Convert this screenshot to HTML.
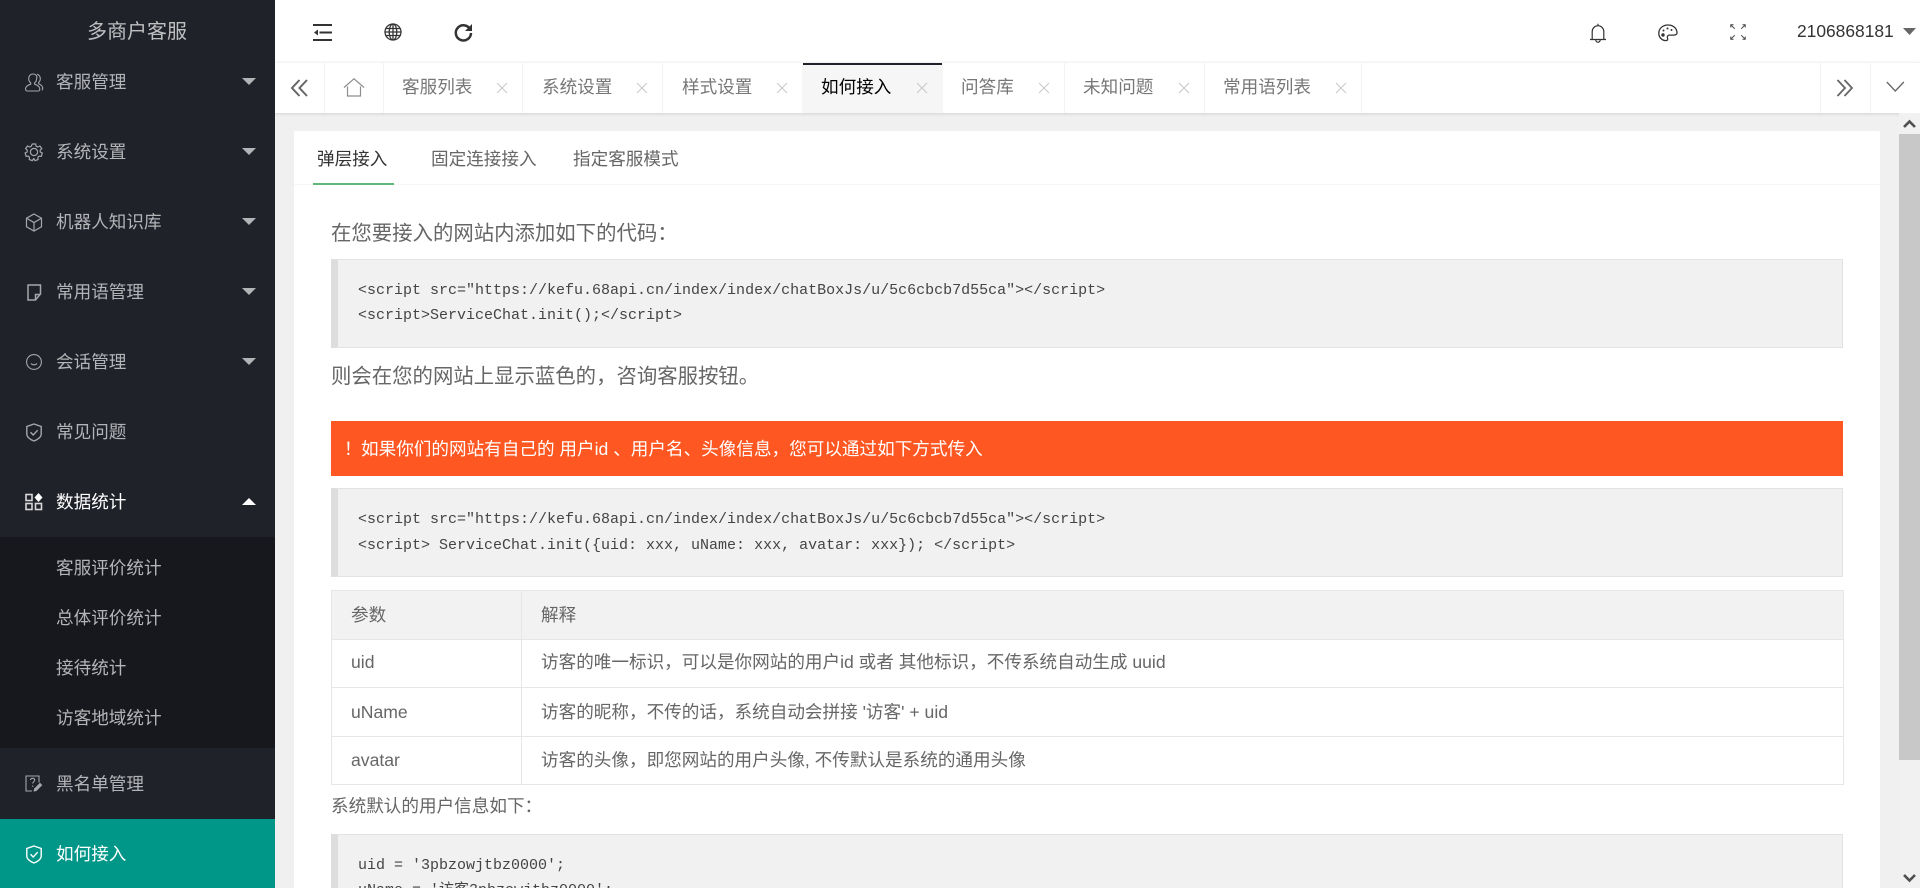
<!DOCTYPE html>
<html lang="zh-CN">
<head>
<meta charset="utf-8">
<title>多商户客服</title>
<style>
html,body{margin:0;padding:0;width:1920px;height:888px;overflow:hidden;background:#f0f0f0}
body{position:relative;font-family:"Liberation Sans","Noto Sans CJK SC",sans-serif;font-size:17.6px;color:#666}
.a,.t,svg{position:absolute}
.t{white-space:pre;height:30px;line-height:30px}
svg{overflow:visible;fill:none}
.m{color:#b3b4b7;left:56px}
.tab{color:#777}
.mono{font-family:"Liberation Mono",monospace;font-size:15px;color:#444;left:358px}
.code{position:absolute;left:331px;background:#f1f1f1;border:1px solid #e2e2e2;border-left:7px solid #ddd;box-sizing:border-box;width:1512px}
.line{position:absolute;background:#e6e6e6}
.d{position:absolute;top:63px;width:1px;height:50px;background:#f3f3f3}
</style>
</head>
<body>

<!-- main content background -->
<div class="a" style="left:275px;top:0;width:1645px;height:62px;background:#fff"></div>
<div class="a" style="left:275px;top:62px;width:1645px;height:51px;background:#fff;border-top:1px solid #f3f3f3;box-sizing:border-box;box-shadow:0 1px 3px rgba(0,0,0,.12)"></div>

<!-- card -->
<div class="a" style="left:294px;top:131px;width:1586px;height:757px;background:#fff;border-radius:2px 2px 0 0"></div>
<div class="a" style="left:294px;top:184px;width:1586px;height:1px;background:#f6f6f6"></div>
<div class="a" style="left:313px;top:183px;width:81px;height:2px;background:#5fb878"></div>
<div class="t" style="left:317px;top:144px;color:#333">弹层接入</div>
<div class="t" style="left:431px;top:144px">固定连接接入</div>
<div class="t" style="left:573px;top:144px">指定客服模式</div>

<!-- content -->
<div class="t" style="left:331px;top:219px;font-size:20.4px">在您要接入的网站内添加如下的代码：</div>
<div class="code" style="top:259px;height:89px"></div>
<div class="t mono" style="top:276px">&lt;script src="https://kefu.68api.cn/index/index/chatBoxJs/u/5c6cbcb7d55ca"&gt;&lt;/script&gt;</div>
<div class="t mono" style="top:301px">&lt;script&gt;ServiceChat.init();&lt;/script&gt;</div>
<div class="t" style="left:331px;top:362px;font-size:20.4px">则会在您的网站上显示蓝色的，咨询客服按钮。</div>

<div class="a" style="left:331px;top:421px;width:1512px;height:55px;background:#ff5722"></div>
<div class="t" style="left:344px;top:434px;color:#fff">！</div>
<div class="t" style="left:361px;top:434px;color:#fff">如果你们的网站有自己的 用户id 、用户名、头像信息，您可以通过如下方式传入</div>

<div class="code" style="top:488px;height:89px"></div>
<div class="t mono" style="top:505px">&lt;script src="https://kefu.68api.cn/index/index/chatBoxJs/u/5c6cbcb7d55ca"&gt;&lt;/script&gt;</div>
<div class="t mono" style="top:531px">&lt;script&gt; ServiceChat.init({uid: xxx, uName: xxx, avatar: xxx}); &lt;/script&gt;</div>

<!-- table -->
<div class="a" style="left:331px;top:590px;width:1512px;height:49px;background:#f2f2f2"></div>
<div class="line" style="left:331px;top:590px;width:1512px;height:1px"></div>
<div class="line" style="left:331px;top:639px;width:1512px;height:1px"></div>
<div class="line" style="left:331px;top:687px;width:1512px;height:1px"></div>
<div class="line" style="left:331px;top:736px;width:1512px;height:1px"></div>
<div class="line" style="left:331px;top:784px;width:1512px;height:1px"></div>
<div class="line" style="left:331px;top:590px;width:1px;height:195px"></div>
<div class="line" style="left:521px;top:590px;width:1px;height:195px"></div>
<div class="line" style="left:1843px;top:590px;width:1px;height:195px"></div>
<div class="t" style="left:351px;top:600px">参数</div>
<div class="t" style="left:541px;top:600px">解释</div>
<div class="t" style="left:351px;top:647px">uid</div>
<div class="t" style="left:541px;top:647px">访客的唯一标识，可以是你网站的用户id 或者 其他标识，不传系统自动生成 uuid</div>
<div class="t" style="left:351px;top:697px">uName</div>
<div class="t" style="left:541px;top:697px">访客的昵称，不传的话，系统自动会拼接 '访客' + uid</div>
<div class="t" style="left:351px;top:745px">avatar</div>
<div class="t" style="left:541px;top:745px">访客的头像，即您网站的用户头像, 不传默认是系统的通用头像</div>
<div class="t" style="left:331px;top:791px">系统默认的用户信息如下：</div>

<div class="code" style="top:834px;height:80px"></div>
<div class="t mono" style="top:851px">uid = '3pbzowjtbz0000';</div>
<div class="t mono" style="top:876px">uName = '访客3pbzowjtbz0000';</div>

<!-- scrollbar -->
<div class="a" style="left:1899px;top:113px;width:21px;height:775px;background:#f1f1f1"></div>
<div class="a" style="left:1899px;top:134px;width:21px;height:626px;background:#c8c8c8"></div>
<svg style="left:1899px;top:113px" width="21" height="21"><path d="M5 14l5.500-5.500L16 14" stroke="#505050" stroke-width="2.600"/></svg>
<svg style="left:1899px;top:867px" width="21" height="21"><path d="M5 8l5.500 5.500L16 8" stroke="#505050" stroke-width="2.600"/></svg>

<!-- top bar icons -->
<svg style="left:313px;top:23px" width="20" height="19"><path d="M0 2h19M6.500 9.500h12.500M0 17h19" stroke="#333" stroke-width="2"/><path d="M5 6.500v6L1 9.500z" fill="#333"/></svg>
<svg style="left:384px;top:23px" width="18" height="18"><g stroke="#333" stroke-width="1.300" fill="none"><circle cx="9" cy="9" r="8"/><ellipse cx="9" cy="9" rx="3.800" ry="8"/><path d="M9 1v16M1.800 5.500h14.400M1 9h16M1.800 12.500h14.400"/></g></svg>
<svg style="left:454px;top:23px" width="19" height="19"><path d="M16.200 6.500A7.600 7.600 0 1 0 17 10" stroke="#333" stroke-width="2.500"/><path d="M18 1v7h-7z" fill="#333"/></svg>

<svg style="left:1589px;top:23px" width="18" height="20"><path d="M1 16.500h16M3.200 16.500V8.500a5.800 5.800 0 0 1 11.600 0v8M9 .8v2M6.800 17a2.200 2.200 0 0 0 4.400 0" stroke="#333" stroke-width="1.200"/></svg>
<svg style="left:1658px;top:24px" width="20" height="18"><path d="M10 1C4.500 1 .8 4.800.8 9.200c0 4.300 3.400 7.400 7 7.400 2 0 2.200-1.200 1.700-2.500-.6-1.600.3-3 2-3h4.200c2.300 0 3.500-1 3.300-2.700C18.600 4 15 1 10 1z" stroke="#333" stroke-width="1.300"/><circle cx="5" cy="11" r="1.700" fill="#333"/><circle cx="5.500" cy="6.500" r="1" fill="#333"/><circle cx="9.500" cy="4.500" r="1" fill="#333"/><circle cx="13.500" cy="6" r="1" fill="#333"/></svg>
<svg style="left:1730px;top:24px" width="16" height="16"><g stroke="#444" stroke-width="1"><path d="M.8 3.500V.8h2.700M.8.800l4 4M15.200 3.500V.8h-2.700M15.200.8l-4 4M.8 12.500v2.700h2.700M.8 15.200l4-4M15.200 12.500v2.700h-2.700M15.200 15.200l-4-4"/></g></svg>
<div class="t" style="left:1797px;top:16px;font-size:17.4px;color:#333">2106868181</div>
<svg style="left:1903px;top:28px" width="13" height="7"><path d="M0 0h13L6.500 7z" fill="#666"/></svg>

<!-- tab bar -->
<div class="d" style="left:324px"></div>
<div class="d" style="left:383px"></div>
<div class="d" style="left:522px"></div>
<div class="d" style="left:662px"></div>
<div class="d" style="left:1064px"></div>
<div class="d" style="left:1204px"></div>
<div class="d" style="left:1361px"></div>
<div class="d" style="left:1820px"></div>
<div class="d" style="left:1870px"></div>
<div class="a" style="left:802px;top:63px;width:141px;height:50px;background:#f6f6f6"></div>
<div class="a" style="left:803px;top:63px;width:139px;height:2px;background:#20222a"></div>

<svg style="left:290px;top:79px" width="20" height="18"><path d="M9.500 1L2 9l7.500 8M17 1L9.500 9l7.500 8" stroke="#666" stroke-width="2"/></svg>
<svg style="left:343px;top:78px" width="22" height="19"><path d="M1 9.500L11 .8l10 8.700M4.500 8.500v9.500h13V8.500" stroke="#8e8e8e" stroke-width="1.200"/></svg>
<svg style="left:1836px;top:79px" width="20" height="18"><path d="M1.500 1L9 9l-7.500 8M8.500 1L16 9l-7.500 8" stroke="#666" stroke-width="1.800"/></svg>
<svg style="left:1886px;top:81px" width="19" height="12"><path d="M.8 1l8.500 9 8.500-9" stroke="#666" stroke-width="1.300"/></svg>

<div class="t tab" style="left:402px;top:72px">客服列表</div>
<div class="t tab" style="left:542px;top:72px">系统设置</div>
<div class="t tab" style="left:682px;top:72px">样式设置</div>
<div class="t" style="left:821px;top:72px;color:#000">如何接入</div>
<div class="t tab" style="left:961px;top:72px">问答库</div>
<div class="t tab" style="left:1083px;top:72px">未知问题</div>
<div class="t tab" style="left:1223px;top:72px">常用语列表</div>
<svg style="left:497px;top:83px" width="10" height="10"><path d="M0 0l10 10M10 0L0 10" stroke="#c8c8c8"/></svg>
<svg style="left:637px;top:83px" width="10" height="10"><path d="M0 0l10 10M10 0L0 10" stroke="#c8c8c8"/></svg>
<svg style="left:777px;top:83px" width="10" height="10"><path d="M0 0l10 10M10 0L0 10" stroke="#c8c8c8"/></svg>
<svg style="left:917px;top:83px" width="10" height="10"><path d="M0 0l10 10M10 0L0 10" stroke="#c8c8c8"/></svg>
<svg style="left:1039px;top:83px" width="10" height="10"><path d="M0 0l10 10M10 0L0 10" stroke="#c8c8c8"/></svg>
<svg style="left:1179px;top:83px" width="10" height="10"><path d="M0 0l10 10M10 0L0 10" stroke="#c8c8c8"/></svg>
<svg style="left:1336px;top:83px" width="10" height="10"><path d="M0 0l10 10M10 0L0 10" stroke="#c8c8c8"/></svg>

<!-- sidebar -->
<div class="a" style="left:0;top:0;width:275px;height:888px;background:#20222a"></div>
<div class="a" style="left:0;top:537px;width:275px;height:211px;background:#16181d;border-radius:2px"></div>
<div class="a" style="left:0;top:819px;width:275px;height:69px;background:#009688"></div>

<div class="t" style="left:87px;top:17px;font-size:20px;color:#bfc0c2">多商户客服</div>

<div class="t m" style="top:67px">客服管理</div>
<div class="t m" style="top:137px">系统设置</div>
<div class="t m" style="top:207px">机器人知识库</div>
<div class="t m" style="top:277px">常用语管理</div>
<div class="t m" style="top:347px">会话管理</div>
<div class="t m" style="top:417px">常见问题</div>
<div class="t" style="left:56px;top:487px;color:#fff">数据统计</div>
<div class="t m" style="top:553px">客服评价统计</div>
<div class="t m" style="top:603px">总体评价统计</div>
<div class="t m" style="top:653px">接待统计</div>
<div class="t m" style="top:703px">访客地域统计</div>
<div class="t m" style="top:769px">黑名单管理</div>
<div class="t" style="left:56px;top:839px;color:#fff">如何接入</div>

<!-- carets -->
<svg style="left:242px;top:78px" width="14" height="7"><path d="M0 0h14L7 7z" fill="#b3b4b7"/></svg>
<svg style="left:242px;top:148px" width="14" height="7"><path d="M0 0h14L7 7z" fill="#b3b4b7"/></svg>
<svg style="left:242px;top:218px" width="14" height="7"><path d="M0 0h14L7 7z" fill="#b3b4b7"/></svg>
<svg style="left:242px;top:288px" width="14" height="7"><path d="M0 0h14L7 7z" fill="#b3b4b7"/></svg>
<svg style="left:242px;top:358px" width="14" height="7"><path d="M0 0h14L7 7z" fill="#b3b4b7"/></svg>
<svg style="left:242px;top:498px" width="14" height="7"><path d="M0 7h14L7 0z" fill="#fff"/></svg>

<!-- sidebar icons -->
<svg style="left:25px;top:73px" width="18" height="19"><g stroke="#a6a7aa" stroke-width="1.100"><path d="M8 1c-2.700 0-4.300 2-4.300 4.600 0 1.900.8 3.300 2 4.200v1.400c-2.300.8-4.700 2-5.100 4-.2 1 .2 2.800 1.200 2.800h11.800c1 0 1.300-1.800 1.100-2.800-.4-2-2.800-3.200-5.100-4V9.800c1.200-.9 2-2.300 2-4.200C12.600 3 10.700 1 8 1z"/><path d="M12 1.300c2 .4 3.300 2.200 3.300 4.300 0 1.700-.7 3-1.700 3.800v1.300c2 .8 3.700 1.900 4 3.700.2 1 0 2.600-.9 2.600"/></g></svg>
<svg style="left:25px;top:143px" width="18" height="18"><g stroke="#a6a7aa" stroke-width="1.200"><path d="M7.300 1h3.400l.5 2.300 1.500.7 2.200-1 1.900 2.600-1.700 1.700.2 1.700 2 1.100-1 3.200-2.300-.2-1.100 1.200.2 2.300-3.100 1-1.200-2H8.600l-1.200 2-3.100-1 .2-2.300-1.100-1.200-2.300.2-1-3.200 2-1.100.2-1.700L.6 5.600 2.500 3l2.200 1 1.500-.7z"/><circle cx="9" cy="9" r="3.600"/></g></svg>
<svg style="left:25px;top:213px" width="18" height="19"><g stroke="#a6a7aa" stroke-width="1.200"><path d="M9 1l7.500 4.200v8.600L9 18l-7.500-4.200V5.200z"/><path d="M2 5.500L9 9.500l7-4M9 9.500V18"/></g></svg>
<svg style="left:27px;top:284px" width="15" height="17"><path d="M13.500 10V1H1v15h7.500zM8.500 16v-5.500h5" stroke="#a6a7aa" stroke-width="1.500"/></svg>
<svg style="left:26px;top:354px" width="16" height="16"><g stroke="#a6a7aa" stroke-width="1.100"><circle cx="8" cy="8" r="7.400"/><path d="M5 9.500c1.500 1.700 4.500 1.700 6 0"/></g></svg>
<svg style="left:26px;top:423px" width="16" height="19"><path d="M8 1l7.200 2.500v7.500c0 3-3.500 5.700-7.200 7-3.700-1.300-7.200-4-7.200-7V3.500zM4.500 9.300l2.700 2.700 4.500-4.800" stroke="#a6a7aa" stroke-width="1.400"/></svg>
<svg style="left:25px;top:493px" width="18" height="18"><g stroke="#d8d8d9" stroke-width="1.600"><rect x="1" y="1.500" width="6" height="6"/><rect x="1" y="10.500" width="6" height="6"/><rect x="10.500" y="10.500" width="6" height="6"/></g><path d="M13.500 0l4 4.500-4 4.500-4-4.500z" fill="#fff"/></svg>
<svg style="left:25px;top:775px" width="18" height="18"><path d="M7 16H1V1h13v6.500" stroke="#a6a7aa" stroke-width="1.100"/><path d="M5.500 5c.3-2.300 4.200-2.300 4.200.1 0 1.700-2 1.600-2 3.400M7.700 10.500v1.300" stroke="#a6a7aa" stroke-width="1.100"/><path d="M8.500 16.500l.5-2.700 6-6 2.300 2.300-6 6z" fill="#a6a7aa"/></svg>
<svg style="left:26px;top:845px" width="16" height="19"><path d="M8 1l7.200 2.500v7.500c0 3-3.500 5.700-7.200 7-3.700-1.300-7.200-4-7.200-7V3.500zM4.500 9.300l2.700 2.700 4.500-4.800" stroke="#fff" stroke-width="1.400"/></svg>

</body>
</html>
